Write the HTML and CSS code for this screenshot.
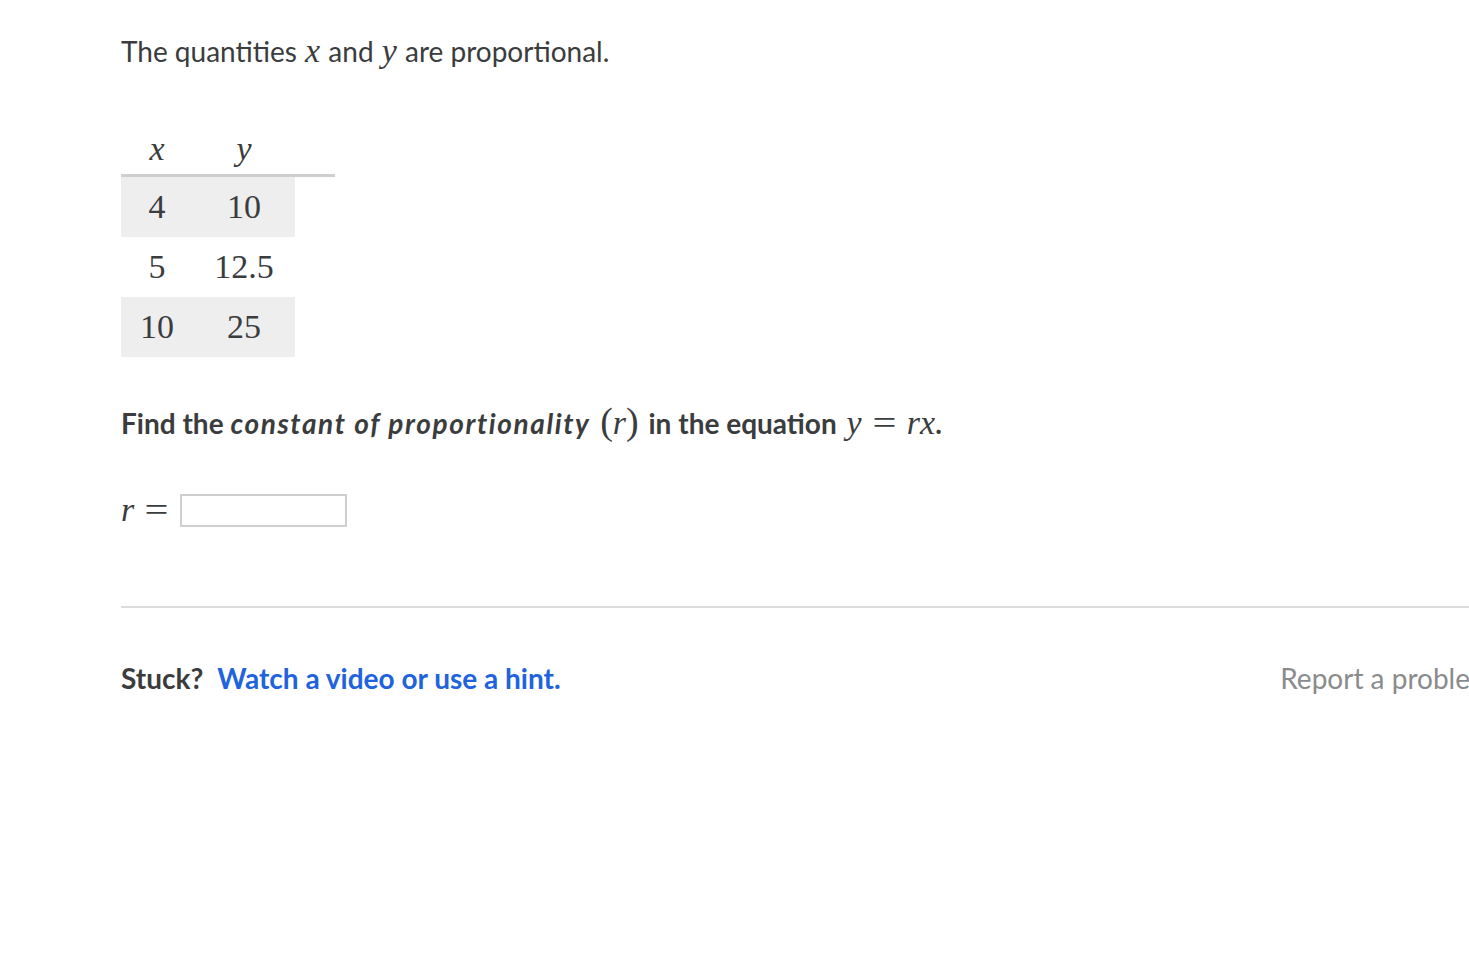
FILE: index.html
```html
<!DOCTYPE html>
<html>
<head>
<meta charset="utf-8">
<link rel="stylesheet" href="styles.css">
</head>
<body>
<div class="page">
  <p class="intro">The quantities <span class="mi">x</span> and <span class="mi">y</span> are proportional.</p>

  <table class="data">
    <thead>
      <tr><th><span class="mi">x</span></th><th><span class="mi">y</span></th><th class="spacer"></th></tr>
    </thead>
    <tbody>
      <tr class="shade"><td>4</td><td>10</td><td class="spacer"></td></tr>
      <tr><td>5</td><td>12.5</td><td class="spacer"></td></tr>
      <tr class="shade"><td>10</td><td>25</td><td class="spacer"></td></tr>
    </tbody>
  </table>

  <p class="question">Find the <em class="term">constant of proportionality</em> <span class="math paren-group"><span class="paren">(</span><span class="mi">r</span><span class="paren">)</span></span> in the equation <span class="math eqn"><span class="mi">y</span><span class="eq">=</span><span class="mi">r</span><span class="mi">x</span></span>.</p>

  <div class="answer">
    <span class="math"><span class="mi">r</span><span class="eq">=</span></span>
    <input class="box" type="text">
  </div>

  <div class="rule"></div>

  <div class="footer">
    <div class="stuck"><span class="label">Stuck?</span><a class="hint" href="#">Watch a video or use a hint.</a></div>
    <a class="report" href="#">Report a problem</a>
  </div>
</div>
</body>
</html>
```

FILE: styles.css
```css
html, body {
  margin: 0;
  padding: 0;
  overflow: hidden;
  background: #fff;
}
.page {
  width: 1372px;
  padding-left: 121px;
  padding-top: 31px;
  font-family: Lato, "Noto Sans", sans-serif;
  font-size: 28px;
  color: #3b3c3e;
}
.intro {
  margin: 0;
  line-height: 40px;
}
.mi {
  font-family: "Liberation Serif", "DejaVu Serif", serif;
  font-style: italic;
  font-weight: normal;
  font-size: 34px;
}
.intro .mi { margin: 0 1px; }
.data {
  margin-top: 53px;
  border-collapse: separate;
  border-spacing: 0;
  font-family: "Liberation Serif", "DejaVu Serif", serif;
  font-size: 34px;
  color: #3b3c3e;
}
.data th {
  font-weight: normal;
  height: 50px;
  padding: 0;
  border-bottom: 3px solid #cfcfcf;
  vertical-align: middle;
  line-height: 38px;
}
.data td {
  height: 60px;
  padding: 0;
  text-align: center;
  line-height: 40px;
}
.data th:nth-child(1), .data td:nth-child(1) { width: 72px; }
.data th:nth-child(2), .data td:nth-child(2) { width: 102px; }
.data .spacer { width: 40px; }
.data tr.shade td { background: #eeeeee; }
.data tr.shade td.spacer { background: #fff; }
.question {
  margin: 44px 0 0;
  line-height: 40px;
  font-weight: bold;
}
.term {
  font-style: italic;
  letter-spacing: 1.6px;
}
.math {
  font-family: "Liberation Serif", "DejaVu Serif", serif;
  font-weight: normal;
  font-size: 34px;
}
.paren-group { margin: 0 3px; }
.eqn { margin-left: 3px; }
.paren { font-size: 38px; }
.eq {
  display: inline-block;
  margin: 0 13px;
  font-style: normal;
  transform: scaleX(1.25);
}
.answer {
  margin-top: 51px;
  display: flex;
  align-items: center;
  height: 32px;
}
.answer .math { margin-right: 1px; line-height: 32px; }
.box {
  width: 167px;
  height: 33px;
  box-sizing: border-box;
  border: 2px solid #cfcfcf;
  border-radius: 0;
  margin: 0;
  padding: 0;
  background: #fff;
}
.rule {
  margin-top: 80px;
  height: 2px;
  background: #dcdcdc;
}
.footer {
  margin-top: 50px;
  display: flex;
  justify-content: space-between;
  align-items: center;
  line-height: 40px;
}
.label {
  font-weight: bold;
  color: #3b3c3e;
  margin-right: 14px;
}
.hint {
  font-weight: bold;
  color: #2063dc;
  text-decoration: none;
}
.report {
  color: #8a8b8d;
  text-decoration: none;
}
```
